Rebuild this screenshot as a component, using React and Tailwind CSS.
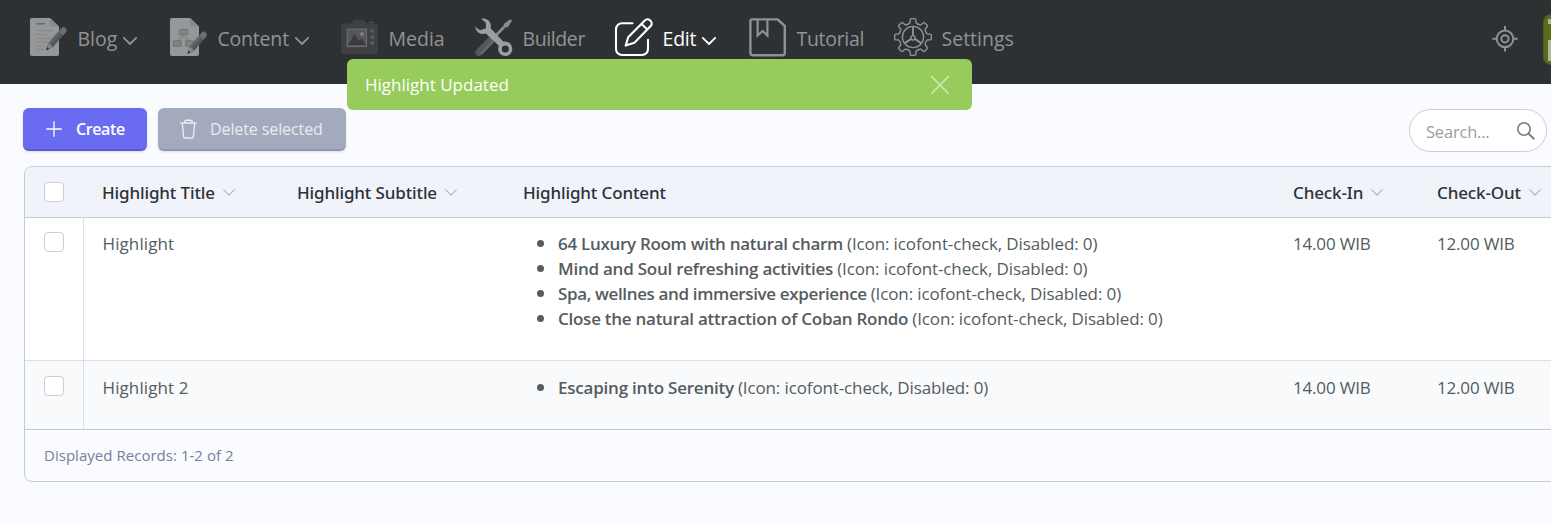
function Pencil({ x1, y1, x2, y2 }) {
  const len = Math.hypot(x2 - x1, y2 - y1);
  const angle = (Math.atan2(y2 - y1, x2 - x1) * 180) / Math.PI;
  return (
    <g transform={`translate(${x1} ${y1}) rotate(${angle})`}>
      <path d={`M0 0L6-3H${len}V3H6Z`} fill="#55585a" />
      <path d={`M6-3H${len - 4}V-.6H5Z`} fill="#636668" />
      <path d={`M${len - 4}-3H${len}a3 3 0 0 1 0 6H${len - 4}Z`} fill="#6b6d70" />
      <path d="M0 0L6-3L7 0L6 3Z" fill="#808284" />
      <path d="M-.5 0L2.6-1.5V1.5Z" fill="#2e3134" />
    </g>
  );
}

const Icon = ({ children }) => (
  <svg className="size-[38px] shrink-0 overflow-visible" viewBox="0 0 38 38" fill="none">{children}</svg>
);

const Sheet = () => (
  <>
    <path d="M2 0H20L29 8.5V36a2 2 0 0 1-2 2H2a2 2 0 0 1-2-2V2A2 2 0 0 1 2 0Z" fill="#959799" />
    <path d="M20 0L29 8.5H22a2 2 0 0 1-2-2Z" fill="#86888a" />
  </>
);

const BlogIcon = () => (
  <Icon>
    <Sheet />
    <path d="M6.5 5.8H15" stroke="#66686a" strokeWidth="1.6" />
    <path d="M6.5 12.7H23M6.5 16.3H17M6.5 20.6H22M6.5 24.2H19M6.5 28H17M6.5 31.4H14" stroke="#858789" strokeWidth="1" />
    <Pencil x1={16.5} y1={32} x2={33.5} y2={12.3} />
  </Icon>
);

const ContentIcon = () => (
  <Icon>
    <Sheet />
    <path d="M13.5 17L8 23M13.5 17L19.5 23" stroke="#818385" strokeWidth="1.2" />
    <g fill="#808284" stroke="#6c6e70" strokeWidth=".8">
      <rect x="9.4" y="11.5" width="8.2" height="5.2" rx=".6" />
      <rect x="3.3" y="22.8" width="8" height="5.6" rx=".6" />
      <rect x="15.6" y="22.8" width="8" height="5.6" rx=".6" />
    </g>
    <Pencil x1={17.8} y1={35.6} x2={33.8} y2={16.8} />
  </Icon>
);

const MediaIcon = () => (
  <Icon>
    <path d="M3 5.5H10L13 2H23L26 5.5H34a3 3 0 0 1 3 3V33a3 3 0 0 1-3 3H3a3 3 0 0 1-3-3V8.5a3 3 0 0 1 3-3Z" fill="#3e4042" />
    <path d="M28 4.5H33" stroke="#4b4d4f" strokeWidth="1.6" />
    <rect x="6.2" y="11.2" width="19.3" height="17.3" fill="#55575a" stroke="#6a6c6e" strokeWidth="1.2" />
    <path d="M7 27L13.5 16L18 23L20.5 20.5L25 27Z" fill="#393b3d" />
    <circle cx="21" cy="16" r="2" fill="#808284" />
    <g fill="#595b5d">
      <circle cx="31.3" cy="13" r="2" />
      <circle cx="31.3" cy="19.2" r="2" />
      <circle cx="31.3" cy="25" r="2" />
    </g>
  </Icon>
);

const BuilderIcon = () => (
  <Icon>
    <path d="M3.8 34.5L15.8 22" stroke="#56585a" strokeWidth="7" strokeLinecap="round" />
    <path d="M6 36L18 23.5" stroke="#67696b" strokeWidth="2.4" />
    <path d="M17 21.5L31.5 6.5" stroke="#8b8d8f" strokeWidth="2.6" />
    <path d="M28.5 6.2L35.5 1.2L37 2.6L32.6 9.8Z" fill="#8b8d8f" />
    <path d="M6.2.8C10-.6 14.5 1.8 15.6 6C16 7.6 15.8 9 15.6 10.2L28.2 23.6C33 22.5 37.3 26 37.3 31C37.3 35 34 38 30.3 38C26 38 22.8 34.5 23.2 30C23.3 29 23.6 28.4 23.8 27.8L10.8 15.6C6 17.3 1 14.5.2 8.8L5 12.3L11 10.2L10.8 4.8Z" fill="#9b9d9f" />
    <circle cx="30.3" cy="31" r="3.5" fill="#2e3134" />
  </Icon>
);

const EditIcon = () => (
  <Icon>
    <path d="M17.5 5.2H7a6 6 0 0 0-6 6V31a6 6 0 0 0 6 6H27a6 6 0 0 0 6-6V21.8" stroke="#fff" strokeWidth="2.1" strokeLinecap="round" />
    <path d="M10.7 27.6L13.2 19.2L29.8 2.4C31.3.8 33.4.8 35 2.3S37.4 6.2 35.9 7.8L19.4 24.7ZM26.5 5.9L32.4 11.5" stroke="#fff" strokeWidth="2.1" strokeLinejoin="round" />
  </Icon>
);

const TutorialIcon = () => (
  <Icon>
    <path d="M3 1.4H28.6L35.8 8V35a2.2 2.2 0 0 1-2.2 2.2H3.6A2.2 2.2 0 0 1 1.4 35V3.2A1.8 1.8 0 0 1 3 1.4Z" stroke="#8f9193" strokeWidth="2.4" strokeLinejoin="round" />
    <path d="M8.6 2V17.6L13.7 13L18.4 17.6V2" stroke="#8f9193" strokeWidth="2.2" />
  </Icon>
);

function gearPath() {
  const point = (r, deg) => {
    const a = (deg * Math.PI) / 180;
    return `${(19 + r * Math.sin(a)).toFixed(2)} ${(19 - r * Math.cos(a)).toFixed(2)}`;
  };
  let d = '';
  for (let i = 0; i < 8; i++) {
    const c = i * 45;
    d += `${i ? 'L' : 'M'}${point(14.6, c - 12)}L${point(17.2, c - 9.5)}Q${point(18.5, c - 9)} ${point(18.4, c - 5)}L${point(18.4, c + 5)}Q${point(18.5, c + 9)} ${point(17.2, c + 9.5)}L${point(14.6, c + 12)}Q${point(12.9, c + 22.5)} ${point(14.6, c + 33)}`;
  }
  return d + 'Z';
}

const SettingsIcon = () => (
  <Icon>
    <g stroke="#8f9193" strokeWidth="1.4" strokeLinejoin="round">
      <path d={gearPath()} />
      <circle cx="19" cy="19" r="10.6" />
      <path d="M19 8.5V17.6M17.6 20.6L10.4 25.4M20.4 20.6L27.6 25.4" strokeWidth="1.9" />
      <circle cx="19" cy="19.8" r="2.2" />
    </g>
  </Icon>
);

const Chevron = ({ className }) => (
  <svg className={className} viewBox="0 0 14 8" fill="none" stroke="currentColor" strokeLinecap="round" strokeLinejoin="round">
    <path d="M.8.8L7 7L13.2.8" />
  </svg>
);

const nav = [
  { label: 'Blog', icon: BlogIcon, menu: true, track: '' },
  { label: 'Content', icon: ContentIcon, menu: true, track: 'tracking-[-0.2px]' },
  { label: 'Media', icon: MediaIcon, track: '' },
  { label: 'Builder', icon: BuilderIcon, track: 'tracking-[-0.4px]' },
  { label: 'Edit', icon: EditIcon, menu: true, active: true, track: 'tracking-[-0.2px]' },
  { label: 'Tutorial', icon: TutorialIcon, track: 'tracking-[-0.3px]' },
  { label: 'Settings', icon: SettingsIcon, track: '' },
];

const Check = () => <span className="block size-5 rounded-[4px] border border-[#c9ced9] bg-white" />;

const columns = [
  { label: 'Highlight Title', sort: true },
  { label: 'Highlight Subtitle', sort: true },
  { label: 'Highlight Content' },
  { label: 'Check-In', sort: true },
  { label: 'Check-Out', sort: true },
];

const rows = [
  {
    title: 'Highlight',
    height: 'h-[143px] bg-white border-b border-[#d8e0e9] pt-[13px]',
    items: [
      ['64 Luxury Room with natural charm', 'tracking-[-0.3px]'],
      ['Mind and Soul refreshing activities', 'tracking-[-0.24px]'],
      ['Spa, wellnes and immersive experience', 'tracking-[-0.36px]'],
      ['Close the natural attraction of Coban Rondo', 'tracking-[-0.26px]'],
    ],
  },
  {
    title: 'Highlight 2',
    height: 'h-[68px] bg-[#f8fafc] pt-[14px]',
    items: [['Escaping into Serenity', 'tracking-[-0.22px]']],
  },
];

const grid = 'grid grid-cols-[59px_195px_226px_770px_144px_200px]';

export default function App() {
  return (
    <div className="relative h-[525px] w-full overflow-hidden bg-[#fafbfe] font-['Open_Sans','Noto_Sans',sans-serif] text-[17px] leading-[25px] text-[#555c60]">
      <header className="flex h-[84px] justify-between overflow-hidden bg-[#2e3134] text-[#919395]">
        <nav className="grid grid-cols-[140px_171px_134px_140px_134px_145px_130px] pl-[30px] pt-[18px]">
          {nav.map(({ label, icon: Glyph, menu, active, track }) => (
            <a key={label} className={`flex h-[38px] items-center ${active ? 'text-white' : ''}`}>
              <Glyph />
              <span className={`ml-[9.5px] mt-[2px] whitespace-nowrap text-[19.5px] ${track}`}>{label}</span>
              {menu && <Chevron className="ml-[6px] mt-[7px] h-2 w-3.5 shrink-0 stroke-[1.8]" />}
            </a>
          ))}
        </nav>
        <div className="flex shrink-0">
          <svg className="mr-[25px] mt-[26px] size-[26px]" viewBox="0 0 26 26" fill="none" stroke="#8f9193" strokeWidth="2">
            <circle cx="13" cy="12.8" r="8.3" />
            <circle cx="13" cy="12.8" r="3.6" />
            <path d="M13 0V5M13 20.6V25.6M.3 12.8H5M21 12.8H25.7" />
          </svg>
          <div className="mt-3.5 h-[51px] w-2 overflow-hidden rounded-l-lg border border-r-0 border-[#4d5a2b] bg-[#5c6b17] pl-[4px]">
            <div className="mt-[4px] h-[5px] bg-[#b3b59d]" />
            <div className="mt-[16px] h-[21px] bg-[#b3b59d]" />
          </div>
        </div>
      </header>

      <div className="flex items-start justify-between pl-[23px] pr-1 pt-6">
        <div className="flex gap-[11px] text-base">
          <button className="flex h-[43px] w-[124px] items-center rounded-[6px] border-b-2 border-[#5a5cce] bg-[#696cf1] pl-[23px] font-semibold text-white shadow-sm">
            <svg className="size-4" viewBox="0 0 16 16" stroke="#fff" strokeWidth="1.3"><path d="M8 .3V15.7M.3 8H15.7" /></svg>
            <span className="ml-[14px] tracking-[-0.4px]">Create</span>
          </button>
          <button className="flex h-[43px] w-[188px] items-center rounded-[6px] border-b-2 border-[#9197b1] bg-[#a4aabd] pl-[22px] text-[#e9ebf1] shadow-sm">
            <svg className="h-5 w-[17px]" viewBox="0 0 17 20" fill="none" stroke="currentColor" strokeWidth="1.4" strokeLinecap="round" strokeLinejoin="round">
              <path d="M.8 4H16.2M2.3 4L3.6 17.4Q3.7 19 5.2 19H11.8Q13.3 19 13.4 17.4L14.7 4M4.6 3.6Q4.8 1.2 6.5 1.2H10.5Q12.2 1.2 12.4 3.6" />
            </svg>
            <span className="ml-[13px] whitespace-nowrap tracking-[-0.1px]">Delete selected</span>
          </button>
        </div>
        <div className="mt-px flex h-[43px] w-[138px] items-center justify-between rounded-full border border-[#c7ccdb] bg-white pl-4 pr-[11px] text-[16.5px] text-[#9b9d9f]">
          <span className="pt-0.5 tracking-[-0.2px]">Search...</span>
          <svg className="size-[18px]" viewBox="0 0 18 18" fill="none" stroke="#7b8082" strokeWidth="1.6">
            <circle cx="7" cy="7" r="6.2" />
            <path d="M11.5 11.5L17.4 17.2" strokeWidth="2" />
          </svg>
        </div>
      </div>

      <section className="ml-6 mt-[14px] w-[1596px] overflow-hidden rounded-[8px] border border-[#c3ccd6]">
        <div className={`${grid} h-[51px] items-center border-b border-[#c3c9d3] bg-[#f0f3f9] font-['Noto_Sans',sans-serif] font-medium text-[#2e3134]`}>
          <div className="pl-[19px]"><Check /></div>
          {columns.map(({ label, sort }) => (
            <div key={label} className="flex items-center whitespace-nowrap pl-[18px] tracking-[-0.13px]">
              {label}
              {sort && <Chevron className="ml-2 h-[7px] w-3 text-[#a6abb1] stroke-[1.2]" />}
            </div>
          ))}
        </div>
        {rows.map(({ title, height, items }) => (
          <div key={title} className={`${grid} ${height}`}>
            <div className="-mt-3.5 border-r border-[#d8e0e9] pl-[19px] pt-[15px]"><Check /></div>
            <div className="pl-[18.5px] tracking-[0.1px]">{title}</div>
            <div />
            <ul className="pl-[32px]">
              {items.map(([name, track]) => (
                <li key={name} className="flex items-center whitespace-nowrap">
                  <span className="mr-[14px] size-[7px] rounded-full bg-[#555c60]" />
                  <strong className={`mr-1 font-semibold ${track}`}>{name}</strong>
                  <span className="tracking-[-0.12px]">(Icon: icofont-check, Disabled: 0)</span>
                </li>
              ))}
            </ul>
            <div className="pl-[18px] tracking-[-0.18px]">14.00 WIB</div>
            <div className="pl-[18px] tracking-[-0.18px]">12.00 WIB</div>
          </div>
        ))}
        <div className="flex h-[52px] items-center border-t border-[#c3c9d3] pl-[19px] text-[15px] text-[#74809d] tracking-[0.03px]">
          Displayed Records: 1-2 of 2
        </div>
      </section>

      <div role="status" className="absolute left-[347px] top-[59px] flex h-[51px] w-[625px] items-center justify-between rounded-[6px] bg-[#97cb5b] pl-[18px] pr-[23px] text-white">
        <span>Highlight Updated</span>
        <svg className="size-[18px]" viewBox="0 0 18 18" stroke="#d3e8bb" strokeWidth="1.6" strokeLinecap="round"><path d="M.8.8L17.2 17.2M17.2.8L.8 17.2" /></svg>
      </div>
    </div>
  );
}
